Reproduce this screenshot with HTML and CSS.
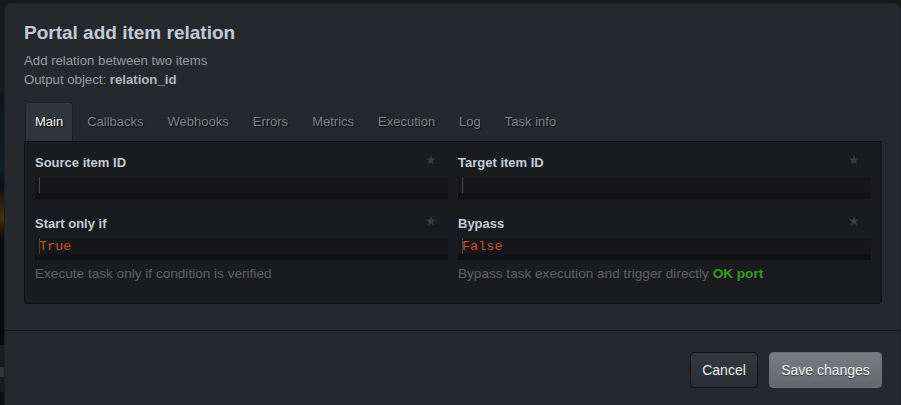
FILE: index.html
```html
<!DOCTYPE html>
<html>
<head>
<meta charset="utf-8">
<link rel="stylesheet" href="styles.css">
</head>
<body>
<div class="modal">
  <div class="modal-body">
    <h1 class="title">Portal add item relation</h1>
    <div class="subtitle">
      <div>Add relation between two items</div>
      <div>Output object: <b>relation_id</b></div>
    </div>
    <div class="tabs">
      <div class="tab active">Main</div>
      <div class="tab">Callbacks</div>
      <div class="tab">Webhooks</div>
      <div class="tab">Errors</div>
      <div class="tab">Metrics</div>
      <div class="tab">Execution</div>
      <div class="tab">Log</div>
      <div class="tab">Task info</div>
    </div>
    <div class="panel">
      <div class="field">
        <div class="label-row"><span class="label">Source item ID</span><svg class="star" viewBox="0 0 10 10"><polygon points="5,0 6.2,3.6 10,3.6 6.9,5.9 8.1,9.5 5,7.3 1.9,9.5 3.1,5.9 0,3.6 3.8,3.6"/></svg></div>
        <div class="input"><span class="cursor"></span></div>
      </div>
      <div class="field">
        <div class="label-row"><span class="label">Target item ID</span><svg class="star" viewBox="0 0 10 10"><polygon points="5,0 6.2,3.6 10,3.6 6.9,5.9 8.1,9.5 5,7.3 1.9,9.5 3.1,5.9 0,3.6 3.8,3.6"/></svg></div>
        <div class="input"><span class="cursor"></span></div>
      </div>
      <div class="field">
        <div class="label-row"><span class="label">Start only if</span><svg class="star" viewBox="0 0 10 10"><polygon points="5,0 6.2,3.6 10,3.6 6.9,5.9 8.1,9.5 5,7.3 1.9,9.5 3.1,5.9 0,3.6 3.8,3.6"/></svg></div>
        <div class="input"><span class="cursor"></span><span class="value">True</span></div>
        <div class="help">Execute task only if condition is verified</div>
      </div>
      <div class="field">
        <div class="label-row"><span class="label">Bypass</span><svg class="star" viewBox="0 0 10 10"><polygon points="5,0 6.2,3.6 10,3.6 6.9,5.9 8.1,9.5 5,7.3 1.9,9.5 3.1,5.9 0,3.6 3.8,3.6"/></svg></div>
        <div class="input"><span class="cursor"></span><span class="value">False</span></div>
        <div class="help">Bypass task execution and trigger directly <b class="ok">OK port</b></div>
      </div>
    </div>
  </div>
  <div class="modal-footer">
    <button class="btn btn-cancel">Cancel</button>
    <button class="btn btn-save">Save changes</button>
  </div>
</div>
</body>
</html>
```

FILE: styles.css
```css
html, body {
  margin: 0;
  padding: 0;
  height: 405px;
  overflow: hidden;
}
body {
  font-family: "Liberation Sans", Arial, sans-serif;
  background: linear-gradient(to bottom,
    #181818 0, #181818 95px,
    #0f161b 95px, #0d1d27 170px,
    #081018 185px, #2a1a08 200px, #46300f 218px, #1a1208 232px,
    #0a0a0a 240px, #0a0a0a 345px,
    #1b1b1b 345px, #1b1b1b 367px,
    #353535 367px, #353535 377px,
    #1c1c1c 377px, #1c1c1c 392px,
    #0f0f0f 392px);
}
.modal {
  margin: 3px 0 0 4px;
  width: 897px;
  box-sizing: border-box;
  min-height: 420px;
  background: #25282d;
  border: 1px solid #1d1f23;
  border-radius: 6px 6px 0 0;
}
.modal-body {
  padding: 18px 18px 26px 19px;
  border-bottom: 1px solid #17191c;
}
.title {
  margin: 0;
  font-size: 19px;
  line-height: 22px;
  font-weight: bold;
  color: #c3cad7;
}
.subtitle {
  margin-top: 8px;
  font-size: 13.2px;
  line-height: 18px;
  color: #999b9e;
}
.subtitle div + div {
  margin-top: 1px;
}
.subtitle b {
  color: #b3b5b8;
}
.tabs {
  display: flex;
  margin-top: 13px;
  padding-left: 1px;
}
.tab {
  font-size: 13px;
  line-height: 37px;
  padding: 0 9px 1px;
  margin-right: 4px;
  border: 1px solid transparent;
  border-bottom: 0;
  border-radius: 4px 4px 0 0;
  color: #7f8287;
  text-shadow: 1px 1px 1px #0c0d0f;
}
.tab.active {
  background: #30343b;
  border-color: #1e2024;
  color: #f4f4f4;
}
.panel {
  display: grid;
  grid-template-columns: 1fr 1fr;
  column-gap: 10px;
  row-gap: 16px;
  background: #1a1b1f;
  border: 1px solid #0f1012;
  border-radius: 0 0 4px 4px;
  padding: 12px 10px 20px 10px;
}
.label-row {
  display: flex;
  justify-content: space-between;
  align-items: flex-start;
  margin-bottom: 5px;
}
.label {
  font-size: 13px;
  line-height: 18px;
  font-weight: bold;
  color: #c5ccd8;
}
.star {
  width: 10px;
  height: 10px;
  margin: 1px 12px 0 0;
  fill: #3b3c41;
}
.input {
  position: relative;
  height: 15px;
  padding: 1px 0 0 4px;
  background: #17171a;
  border-bottom: 6px solid #111113;
  font-family: "Liberation Mono", "Courier New", monospace;
  font-size: 13.5px;
  line-height: 16px;
}
.cursor {
  position: absolute;
  left: 4px;
  top: 0;
  width: 1px;
  height: 16px;
  background: #45464a;
}
.value {
  color: #cf4f2c;
}
.help {
  margin-top: 5px;
  font-size: 13.6px;
  line-height: 18px;
  color: #606165;
}
.ok {
  color: #369a1e;
}
.modal-footer {
  display: flex;
  justify-content: flex-end;
  gap: 11px;
  padding: 21px 18px 0 19px;
}
.btn {
  box-sizing: border-box;
  height: 36px;
  padding: 0;
  white-space: nowrap;
  font-family: "Liberation Sans", Arial, sans-serif;
  font-size: 14px;
  border-radius: 4px;
  color: #ececec;
}
.btn-cancel {
  width: 68px;
  background: linear-gradient(to bottom, #353840, #2a2d33);
  border: 1px solid #131417;
}
.btn-save {
  width: 113px;
  background: linear-gradient(to bottom, #787d84, #63686f);
  border: 1px solid #6a6f76;
  color: #f3f3f3;
  text-shadow: 0 1px 1px rgba(0,0,0,0.45);
}
```
